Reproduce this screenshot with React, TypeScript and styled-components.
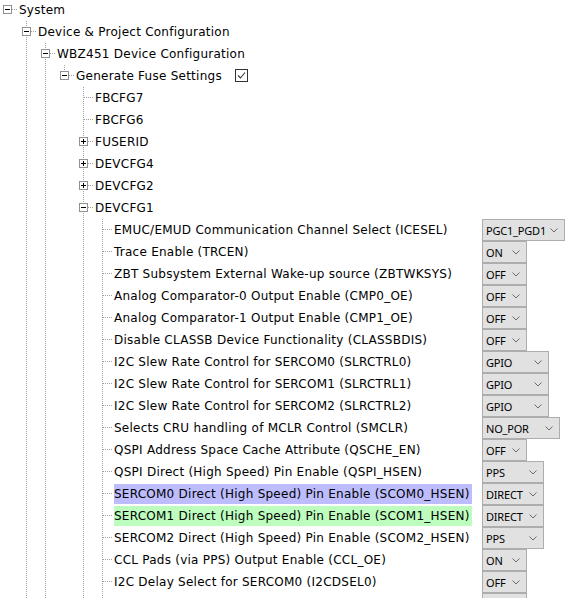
import React from 'react';
import styled, { createGlobalStyle } from 'styled-components';

const Global = createGlobalStyle`
  html, body { margin: 0; padding: 0; background: #ffffff; overflow: hidden; }
  body { font-family: "DejaVu Sans", Verdana, sans-serif; }
`;

type Kind = 'open' | 'closed' | 'leaf';
type Row = {
  label: string;
  depth: number;
  kind: Kind;
  guides: boolean[];
  last?: boolean;
  value?: string;
  w?: number;
  hl?: 'blue' | 'green';
  check?: boolean;
};

const G4 = [false, true, true, false];
const G5 = [false, true, true, false, true];

const rows: Row[] = [
  { label: 'System', depth: 0, kind: 'open', guides: [], last: true },
  { label: 'Device & Project Configuration', depth: 1, kind: 'open', guides: [false] },
  { label: 'WBZ451 Device Configuration', depth: 2, kind: 'open', guides: [false, true] },
  { label: 'Generate Fuse Settings', depth: 3, kind: 'open', guides: [false, true, true], last: true, check: true },
  { label: 'FBCFG7', depth: 4, kind: 'leaf', guides: G4 },
  { label: 'FBCFG6', depth: 4, kind: 'leaf', guides: G4 },
  { label: 'FUSERID', depth: 4, kind: 'closed', guides: G4 },
  { label: 'DEVCFG4', depth: 4, kind: 'closed', guides: G4 },
  { label: 'DEVCFG2', depth: 4, kind: 'closed', guides: G4 },
  { label: 'DEVCFG1', depth: 4, kind: 'open', guides: G4 },
  { label: 'EMUC/EMUD Communication Channel Select (ICESEL)', depth: 5, kind: 'leaf', guides: G5, value: 'PGC1_PGD1', w: 83 },
  { label: 'Trace Enable (TRCEN)', depth: 5, kind: 'leaf', guides: G5, value: 'ON', w: 45 },
  { label: 'ZBT Subsystem External Wake-up source (ZBTWKSYS)', depth: 5, kind: 'leaf', guides: G5, value: 'OFF', w: 45 },
  { label: 'Analog Comparator-0 Output Enable (CMP0_OE)', depth: 5, kind: 'leaf', guides: G5, value: 'OFF', w: 45 },
  { label: 'Analog Comparator-1 Output Enable (CMP1_OE)', depth: 5, kind: 'leaf', guides: G5, value: 'OFF', w: 45 },
  { label: 'Disable CLASSB Device Functionality (CLASSBDIS)', depth: 5, kind: 'leaf', guides: G5, value: 'OFF', w: 45 },
  { label: 'I2C Slew Rate Control for SERCOM0 (SLRCTRL0)', depth: 5, kind: 'leaf', guides: G5, value: 'GPIO', w: 67 },
  { label: 'I2C Slew Rate Control for SERCOM1 (SLRCTRL1)', depth: 5, kind: 'leaf', guides: G5, value: 'GPIO', w: 67 },
  { label: 'I2C Slew Rate Control for SERCOM2 (SLRCTRL2)', depth: 5, kind: 'leaf', guides: G5, value: 'GPIO', w: 67 },
  { label: 'Selects CRU handling of MCLR Control (SMCLR)', depth: 5, kind: 'leaf', guides: G5, value: 'NO_POR', w: 78 },
  { label: 'QSPI Address Space Cache Attribute (QSCHE_EN)', depth: 5, kind: 'leaf', guides: G5, value: 'OFF', w: 45 },
  { label: 'QSPI Direct (High Speed) Pin Enable (QSPI_HSEN)', depth: 5, kind: 'leaf', guides: G5, value: 'PPS', w: 62 },
  { label: 'SERCOM0 Direct (High Speed) Pin Enable (SCOM0_HSEN)', depth: 5, kind: 'leaf', guides: G5, value: 'DIRECT', w: 62, hl: 'blue' },
  { label: 'SERCOM1 Direct (High Speed) Pin Enable (SCOM1_HSEN)', depth: 5, kind: 'leaf', guides: G5, value: 'DIRECT', w: 62, hl: 'green' },
  { label: 'SERCOM2 Direct (High Speed) Pin Enable (SCOM2_HSEN)', depth: 5, kind: 'leaf', guides: G5, value: 'PPS', w: 62 },
  { label: 'CCL Pads (via PPS) Output Enable (CCL_OE)', depth: 5, kind: 'leaf', guides: G5, value: 'ON', w: 45 },
  { label: 'I2C Delay Select for SERCOM0 (I2CDSEL0)', depth: 5, kind: 'leaf', guides: G5, value: 'OFF', w: 45 },
  { label: 'I2C Delay Select for SERCOM1 (I2CDSEL1)', depth: 5, kind: 'leaf', guides: G5, value: 'OFF', w: 45 },
];

const Tree = styled.div`
  display: flex;
  flex-direction: column;
  margin-top: -1px;
`;

const RowBox = styled.div`
  display: flex;
  align-items: center;
  height: 22px;
`;

const LabelArea = styled.div`
  flex: 0 0 482px;
  display: flex;
  align-items: center;
  height: 22px;
  min-width: 0;
`;

const Gutter = styled.div`
  display: flex;
  flex: 0 0 auto;
`;

const CellSvg = styled.svg`
  display: block;
  flex: 0 0 19px;
`;

const Label = styled.span<{ $hl?: 'blue' | 'green' }>`
  font-family: "DejaVu Sans", Verdana, sans-serif;
  font-size: 12px;
  letter-spacing: 0.25px;
  color: #000000;
  white-space: nowrap;
  line-height: 20px;
  height: 20px;
  padding: 0 2px 0 0;
  background: ${(p) => (p.$hl === 'blue' ? '#bdbdfd' : p.$hl === 'green' ? '#bdfdbd' : 'transparent')};
`;

const CheckWrap = styled.span`
  display: inline-flex;
  margin-left: 11px;
  margin-top: -2px;
`;

const SmallSvg = styled.svg`
  display: block;
`;

const Combo = styled.div<{ $w: number }>`
  box-sizing: border-box;
  width: ${(p) => p.$w}px;
  height: 22px;
  border: 1px solid #adadad;
  background: #e1e1e1;
  display: flex;
  align-items: center;
  justify-content: space-between;
  padding: 0 6px 0 3px;
  font-family: "Noto Sans", "Open Sans", sans-serif;
  font-size: 11px;
  letter-spacing: -0.2px;
  color: #000000;
  white-space: nowrap;
`;

const DASH = '1 1';
const LINE = '#a0a0a0';

function Cell({ line }: { line: boolean }) {
  return (
    <CellSvg width={19} height={22}>
      {line && <line x1={7.5} y1={0} x2={7.5} y2={22} stroke={LINE} strokeDasharray={DASH} />}
    </CellSvg>
  );
}

function Connector({ row }: { row: Row }) {
  const hasParent = row.depth > 0;
  const box = row.kind !== 'leaf';
  return (
    <CellSvg width={19} height={22}>
      {hasParent && <line x1={7.5} y1={0} x2={7.5} y2={10} stroke={LINE} strokeDasharray={DASH} />}
      {!row.last && <line x1={7.5} y1={10} x2={7.5} y2={22} stroke={LINE} strokeDasharray={DASH} />}
      <line x1={box ? 12 : 8} y1={10.5} x2={18} y2={10.5} stroke={LINE} strokeDasharray={DASH} />
      {box && (
        <>
          <rect x={3.5} y={6.5} width={8} height={8} fill="#ffffff" stroke="#919191" />
          <line x1={5} y1={10.5} x2={10} y2={10.5} stroke="#000000" />
          {row.kind === 'closed' && <line x1={7.5} y1={8} x2={7.5} y2={13} stroke="#000000" />}
        </>
      )}
    </CellSvg>
  );
}

function CheckBox() {
  return (
    <SmallSvg width={13} height={13}>
      <rect x={0.5} y={0.5} width={12} height={12} fill="#ffffff" stroke="#333333" />
      <polyline points="3,6.5 5.5,9 10,3.5" fill="none" stroke="#333333" strokeWidth={1.1} />
    </SmallSvg>
  );
}

function Chevron() {
  return (
    <SmallSvg width={8} height={5}>
      <polyline points="0.5,0.5 4,4 7.5,0.5" fill="none" stroke="#6d6d6d" strokeWidth={1} />
    </SmallSvg>
  );
}

export default function App() {
  return (
    <>
      <Global />
      <Tree>
        {rows.map((r, i) => (
          <RowBox key={i}>
            <LabelArea>
              <Gutter>
                {r.guides.map((g, j) => (
                  <Cell key={j} line={g} />
                ))}
                <Connector row={r} />
              </Gutter>
              <Label $hl={r.hl}>{r.label}</Label>
              {r.check && (
                <CheckWrap>
                  <CheckBox />
                </CheckWrap>
              )}
            </LabelArea>
            {r.value && (
              <Combo $w={r.w ?? 45}>
                <span>{r.value}</span>
                <Chevron />
              </Combo>
            )}
          </RowBox>
        ))}
      </Tree>
    </>
  );
}
